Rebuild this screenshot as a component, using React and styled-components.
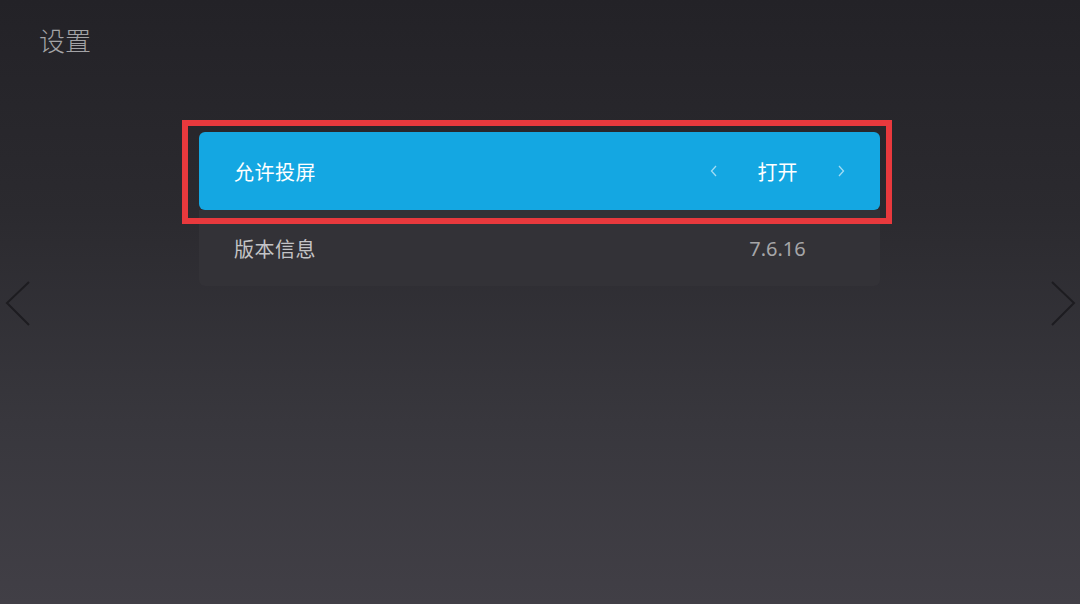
import React from 'react'
import styled, { createGlobalStyle } from 'styled-components'

const GlobalStyle = createGlobalStyle`
    html, body {
        margin: 0;
        padding: 0;
        background: #2c2b30;
    }
    body {
        font-family: "Noto Sans", "Noto Sans CJK SC", sans-serif;
    }
`

const Screen = styled.div`
    position: relative;
    width: 1080px;
    height: 604px;
    overflow: hidden;
    background: linear-gradient(180deg, #232227 0%, #2b2a2f 35%, #38373d 70%, #413f46 100%);
    display: flex;
    flex-direction: column;
`

const Header = styled.header`
    padding: 22px 0 0 39px;
    height: 56px;
    box-sizing: border-box;
`

const Title = styled.h1`
    margin: 0;
    font-family: "Noto Sans CJK SC", sans-serif;
    font-weight: 300;
    font-size: 26px;
    line-height: 36px;
    color: #a3a3a6;
`

const List = styled.div`
    position: relative;
    margin: 76px 0 0 199px;
    width: 681px;
    display: flex;
    flex-direction: column;
`

const Row = styled.div`
    height: ${p => (p.focused ? '78px' : '76px')};
    padding: 0 35px;
    box-sizing: border-box;
    display: flex;
    align-items: center;
    justify-content: space-between;
    background: ${p => (p.focused ? '#14a7e2' : '#333237')};
    border-radius: ${p => (p.focused ? '6px' : '0 0 6px 6px')};
    font-family: "Noto Sans CJK SC", sans-serif;
    font-size: 20px;
    color: ${p => (p.focused ? '#ffffff' : '#c4c4c6')};
`

const Label = styled.span`
    letter-spacing: 0.5px;
`

const Value = styled.div`
    width: 135px;
    display: flex;
    align-items: center;
    justify-content: space-between;
    color: ${p => (p.focused ? '#ffffff' : '#a6a6a8')};
`

const ValueText = styled.span`
    flex: 1;
    text-align: center;
    font-family: ${p => (p.digits ? '"Noto Sans", sans-serif' : '"Noto Sans CJK SC", sans-serif')};
`

const Chevron = styled.svg`
    width: 7px;
    height: 12px;
    flex: none;
    visibility: ${p => (p.hidden ? 'hidden' : 'visible')};
`

const FocusFrame = styled.div`
    position: absolute;
    left: -17px;
    top: -12px;
    width: 710px;
    height: 104px;
    box-sizing: border-box;
    border: 6px solid #e8393d;
    pointer-events: none;
`

const SideArrow = styled.svg`
    position: absolute;
    top: 280px;
    ${p => (p.side === 'left' ? 'left: 5px;' : 'right: 4px;')}
    width: 26px;
    height: 48px;
`

const SmallChevron = ({ dir, hidden }) => (
    <Chevron viewBox="0 0 7 12" hidden={hidden}>
        <polyline
            points={dir === 'left' ? '6,1 1.5,6 6,11' : '1,1 5.5,6 1,11'}
            fill="none"
            stroke="rgba(255,255,255,0.6)"
            strokeWidth="1.3"
        />
    </Chevron>
)

const Arrow = ({ side }) => (
    <SideArrow side={side} viewBox="0 0 26 48">
        <polyline
            points={side === 'left' ? '24,2 2,23 24,45' : '2,2 24,23 2,45'}
            fill="none"
            stroke="#1d1c20"
            strokeWidth="2"
        />
    </SideArrow>
)

const App = () => (
    <Screen>
        <GlobalStyle />
        <Header>
            <Title>设置</Title>
        </Header>

        <List>
            <Row focused>
                <Label>允许投屏</Label>
                <Value focused>
                    <SmallChevron dir="left" />
                    <ValueText>打开</ValueText>
                    <SmallChevron dir="right" />
                </Value>
            </Row>
            <Row>
                <Label>版本信息</Label>
                <Value>
                    <SmallChevron dir="left" hidden />
                    <ValueText digits>7.6.16</ValueText>
                    <SmallChevron dir="right" hidden />
                </Value>
            </Row>
            <FocusFrame />
        </List>

        <Arrow side="left" />
        <Arrow side="right" />
    </Screen>
)

export default App
